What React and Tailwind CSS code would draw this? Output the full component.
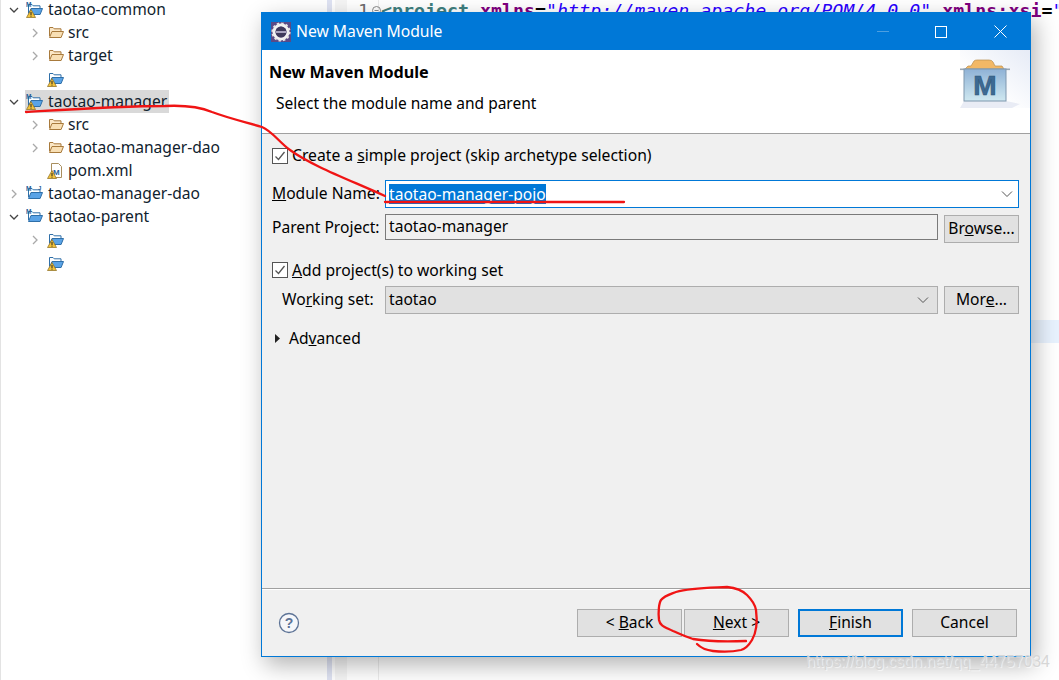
import React from 'react';

const ui = 'font-["Noto_Sans",sans-serif]';

function Chevron({ open }) {
  return (
    <svg width="10" height="10" viewBox="0 0 10 10" fill="none" stroke={open ? '#444' : '#a9a9a9'} strokeWidth="1.3">
      {open ? <path d="M1 3l4 4 4-4" /> : <path d="M3 1l4 4-4 4" />}
    </svg>
  );
}

function Warn() {
  return (
    <g>
      <path d="M5 8.5L9.5 16.5H.5z" fill="#f3c33b" stroke="#8a6a1c" strokeWidth="0.7" />
      <rect x="4.5" y="11" width="1" height="3" fill="#222" />
      <rect x="4.5" y="14.6" width="1" height="1" fill="#222" />
    </g>
  );
}

function Folder({ blue, warn, maven, j }) {
  const back = blue ? '#fff' : '#fbe7c6';
  const front = blue ? '#5aa3e6' : '#f8dfb4';
  const line = blue ? '#2f6fa8' : '#a87a3c';
  return (
    <svg width="18" height="18" viewBox="0 0 18 18" className="shrink-0">
      <path d="M2.5 12V3.5H6l1.2 1.3H14V8" fill={back} stroke={line} strokeWidth="1" />
      <path d="M2.5 13.5L5 7.5h11.5l-2.4 6z" fill={front} stroke={line} strokeWidth="1" />
      {maven && <text x="0" y="5.5" fontSize="6.5" fontWeight="700" fill="#2a5f96" fontFamily="Liberation Sans">M</text>}
      {j && <text x="12" y="5" fontSize="6" fontWeight="700" fill="#2a5f96" fontFamily="Liberation Sans">J</text>}
      {warn && <Warn />}
    </svg>
  );
}

function PomIcon() {
  return (
    <svg width="18" height="18" viewBox="0 0 18 18" className="shrink-0">
      <path d="M4.5 1.5h7l3 3v11h-10z" fill="#fff" stroke="#a98f5e" />
      <text x="6" y="12.5" fontSize="8" fontWeight="700" fill="#2a5f96" fontFamily="Liberation Sans">M</text>
      <Warn />
    </svg>
  );
}

function TreeRow({ depth, arrow, label, children, selected }) {
  return (
    <div className={depth ? 'flex items-center h-[23px] pl-[29px]' : 'flex items-center h-[23px] pl-[8px]'}>
      <div className="w-[10px] shrink-0 flex justify-center">
        {arrow && <Chevron open={arrow === 'open'} />}
      </div>
      <div className={`flex items-center h-[23px] ml-[6px] pl-[1px] pr-[2px] ${depth ? 'gap-[3px]' : 'gap-[4px]'} ${selected ? 'bg-[#d9d9d9]' : ''}`}>
        {children}
        {label && <span className="text-[15.6px] leading-[17px] text-[#10222e] whitespace-nowrap">{label}</span>}
      </div>
    </div>
  );
}

function Check({ children }) {
  return (
    <div className="flex items-center gap-[4px] text-[15.7px] text-black">
      <span className="w-[16px] h-[16px] border border-[#555] bg-white flex items-center justify-center">
        <svg width="12" height="12" viewBox="0 0 12 12" fill="none" stroke="#555" strokeWidth="1.3"><path d="M1.5 6.5l3 3 6-7.5" /></svg>
      </span>
      <span>{children}</span>
    </div>
  );
}

function Btn({ children, w, primary, className = '' }) {
  return (
    <button type="button" className={`h-[28px] text-[15.6px] text-black bg-[#e1e1e1] ${primary ? 'border-2 border-[#0078d7]' : 'border border-[#adadad]'} ${w} ${className}`}>
      {children}
    </button>
  );
}

function ComboArrow() {
  return (
    <svg width="12" height="8" viewBox="0 0 12 8" fill="none" stroke="#555" strokeWidth="1"><path d="M1 1.5l5 5 5-5" /></svg>
  );
}

function GearIcon() {
  return (
    <svg width="20" height="20" viewBox="0 0 20 20">
      <rect width="20" height="20" fill="#5a4a86" />
      <circle cx="10" cy="10" r="7" fill="none" stroke="#f2f2f2" strokeWidth="3" />
      <circle cx="10" cy="10" r="8.6" fill="none" stroke="#e6e6e6" strokeWidth="2" strokeDasharray="2.4 2.1" />
      <circle cx="10" cy="10" r="5.4" fill="#3f3a5c" />
      <rect x="5" y="9" width="10" height="2" fill="#a9a4c0" />
    </svg>
  );
}

function MavenLogo() {
  return (
    <svg width="70" height="58" viewBox="0 0 70 58">
      <defs>
        <linearGradient id="wash" x1="0" y1="1" x2="1" y2="0">
          <stop offset="0.35" stopColor="#fff" />
          <stop offset="1" stopColor="#e6ebf6" />
        </linearGradient>
        <linearGradient id="box" x1="0" y1="0" x2="0" y2="1">
          <stop offset="0" stopColor="#8fb2d6" />
          <stop offset="1" stopColor="#cfe8f0" />
        </linearGradient>
      </defs>
      <rect width="70" height="58" fill="url(#wash)" />
      <path d="M4 51h42l14 3-8 4H0z" fill="#e9ecf5" />
      <path d="M5 19l3-3h3l3-5q1-1 3-1h12q3 0 4 2l2 4h7l2 3z" fill="#f2b866" stroke="#b98d4c" strokeWidth="0.7" />
      <rect x="0" y="18.5" width="50" height="1.6" fill="#9aa7b4" />
      <rect x="4" y="19" width="42" height="32" fill="url(#box)" stroke="#7f97ae" />
      <text x="25" y="45" textAnchor="middle" fontSize="28" fontWeight="700" fill="#3c6a94" stroke="#2e5376" strokeWidth="0.6" fontFamily="Liberation Sans">M</text>
    </svg>
  );
}

function Annotations() {
  return (
    <svg className="absolute inset-0 pointer-events-none" width="1059" height="680" fill="none" stroke="#f01414" strokeWidth="2.3" strokeLinecap="round" strokeLinejoin="round">
      <path d="M26 112C60 110 120 106 165 106C185 105 200 107 212 112C228 118 245 122 262 127C272 131 280 143 290 150C312 166 350 180 385 196" />
      <path d="M385 202L624 202" />
      <path d="M746 641C725 642 705 641 693 639C683 636 678 633 673 631C665 627 660 626 659 620C658 612 659 603 661 600C664 596 668 595 676 592C690 588 705 588 727 587C737 588 743 591 747 595C752 600 755 604 756 610C758 625 756 633 752 640C749 645 745 649 741 650C732 652 722 652 713 651C705 650 700 647 697 644" />
    </svg>
  );
}

export default function App() {
  return (
    <div className={`relative w-[1059px] h-[680px] overflow-hidden bg-white flex ${ui}`}>
      {/* project explorer */}
      <div className="w-[327px] shrink-0 -mt-[2px] border-l border-[#e3e3e3]">
        <TreeRow depth={0} arrow="open" label="taotao-common"><Folder blue warn maven /></TreeRow>
        <TreeRow depth={1} arrow="closed" label="src"><Folder /></TreeRow>
        <TreeRow depth={1} arrow="closed" label="target"><Folder /></TreeRow>
        <TreeRow depth={1}><Folder blue warn /></TreeRow>
        <TreeRow depth={0} arrow="open" label="taotao-manager" selected><Folder blue warn maven /></TreeRow>
        <TreeRow depth={1} arrow="closed" label="src"><Folder /></TreeRow>
        <TreeRow depth={1} arrow="closed" label="taotao-manager-dao"><Folder /></TreeRow>
        <TreeRow depth={1} label="pom.xml"><PomIcon /></TreeRow>
        <TreeRow depth={0} arrow="closed" label="taotao-manager-dao"><Folder blue maven j /></TreeRow>
        <TreeRow depth={0} arrow="open" label="taotao-parent"><Folder blue maven /></TreeRow>
        <TreeRow depth={1} arrow="closed"><Folder blue warn /></TreeRow>
        <TreeRow depth={1}><Folder blue warn /></TreeRow>
      </div>

      {/* editor behind the dialog */}
      <div className="w-[5px] shrink-0 bg-[#dfe3f3]" />
      <div className="w-[3px] shrink-0 bg-white" />
      <div className="w-[12px] shrink-0 bg-[#f5f5f5]" />
      <div className="flex-1 flex min-w-0 font-['DejaVu_Sans_Mono',monospace] text-[18.3px]">
        <div className="w-[32px] shrink-0 border-r border-[#ececec] h-full">
          <div className="flex items-center h-[21px] pl-[11px] whitespace-nowrap text-[#6d6d6d]">
            <span>1</span>
            <svg className="ml-[3px] shrink-0" width="9" height="9" viewBox="0 0 9 9" fill="none" stroke="#8a8a8a"><circle cx="4.5" cy="4.5" r="4" /><path d="M2.5 4.5h4" /></svg>
          </div>
        </div>
        <div className="flex-1 min-w-0 pl-[2px]">
          <div className="flex items-center h-[21px] whitespace-nowrap font-bold">
            <span className="text-[#3f7f7f]">&lt;project&nbsp;</span>
            <span className="text-[#7f007f]">xmlns</span>
            <span className="text-black">=</span>
            <span className="text-[#2a00ff] italic font-normal">"http://maven.apache.org/POM/4.0.0"</span>
            <span>&nbsp;</span>
            <span className="text-[#7f007f]">xmlns:xsi</span>
            <span className="text-black">=</span>
            <span className="text-[#2a00ff] italic font-normal">"</span>
          </div>
          <div className="mt-[299px] h-[23px] bg-[#e8f2fe]" />
        </div>
      </div>

      {/* dialog */}
      <div className="absolute left-[261px] top-[12px] w-[770px] h-[645px] flex flex-col bg-[#f0f0f0] border border-[#0078d7] shadow-[4px_8px_22px_rgba(0,0,0,0.3)]">
        <div className="h-[37px] shrink-0 bg-[#0078d7] flex items-center pl-[9px] text-white text-[15.7px]">
          <GearIcon />
          <span className="ml-[5px]">New Maven Module</span>
          <svg className="ml-auto mr-[46px]" width="12" height="2" viewBox="0 0 12 2"><rect width="12" height="1" fill="#4d9fe0" /></svg>
          <svg className="mr-[47px]" width="12" height="12" viewBox="0 0 12 12" fill="none" stroke="#fff"><rect x="0.5" y="0.5" width="11" height="11" /></svg>
          <svg className="mr-[23px]" width="13" height="13" viewBox="0 0 13 13" fill="none" stroke="#fff"><path d="M.5.5l12 12M12.5.5l-12 12" /></svg>
        </div>
        <div className="h-[84px] shrink-0 bg-white border-b border-[#a0a0a0] relative pl-[7px] pt-[10px]">
          <div className="text-[16.2px] font-bold text-black leading-[24px]">New Maven Module</div>
          <div className="text-[15.5px] text-black leading-[22px] mt-[8px] pl-[7px]">Select the module name and parent</div>
          <div className="absolute right-0 top-0"><MavenLogo /></div>
        </div>
        <div className="flex-1 pl-[10px] pr-[11px] pt-[10px]">
          <Check>Create a <u>s</u>imple project (skip archetype selection)</Check>
          <div className="flex items-center mt-[12px] text-[15.6px] text-black">
            <span className="w-[113px] shrink-0"><u>M</u>odule Name:</span>
            <div className="flex-1 h-[28px] bg-white border border-[#0078d7] flex items-center pl-[3px] pr-[5px]">
              <span className="bg-[#0078d7] text-white leading-[20px]">taotao-manager-pojo</span>
              <span className="ml-auto"><ComboArrow /></span>
            </div>
          </div>
          <div className="flex items-start mt-[6px] text-[15.6px] text-black">
            <span className="w-[113px] shrink-0 self-center">Parent Project:</span>
            <div className="flex-1 h-[26px] bg-[#f0f0f0] border border-[#7a7a7a] flex items-center pl-[3px]">taotao-manager</div>
            <Btn w="w-[75px]" className="ml-[6px] mt-[1px]">Br<u>o</u>wse...</Btn>
          </div>
          <div className="mt-[16px]"><Check><u>A</u>dd project(s) to working set</Check></div>
          <div className="flex items-center mt-[4px] text-[15.6px] text-black">
            <span className="w-[113px] shrink-0 pl-[10px]">Wo<u>r</u>king set:</span>
            <div className="flex-1 h-[28px] bg-[#e1e1e1] border border-[#adadad] flex items-center pl-[3px] pr-[8px]">
              taotao
              <span className="ml-auto"><ComboArrow /></span>
            </div>
            <Btn w="w-[75px]" className="ml-[6px]">Mor<u>e</u>...</Btn>
          </div>
          <div className="flex items-center mt-[13px] text-[15.6px] text-black">
            <svg className="mr-[9px] ml-[3px]" width="5" height="9" viewBox="0 0 5 9"><path d="M0 0l5 4.5L0 9z" fill="#222" /></svg>
            <span>Ad<u>v</u>anced</span>
          </div>
        </div>
        <div className="h-[68px] shrink-0 border-t border-[#a0a0a0] flex items-center pl-[16px] pr-[13px] pt-[1px] shadow-[inset_0_1px_0_#fff]">
          <svg width="22" height="22" viewBox="0 0 22 22">
            <circle cx="11" cy="11" r="9.5" fill="#f6f7fa" stroke="#5d7396" strokeWidth="1.3" />
            <text x="11" y="16" textAnchor="middle" fontSize="14" fontWeight="700" fill="#5d7396" fontFamily="Liberation Sans">?</text>
          </svg>
          <div className="ml-auto flex">
            <Btn w="w-[105px]">&lt; <u>B</u>ack</Btn>
            <Btn w="w-[105px]" className="ml-[2px]"><u>N</u>ext &gt;</Btn>
            <Btn w="w-[105px]" primary className="ml-[9px]"><u>F</u>inish</Btn>
            <Btn w="w-[105px]" className="ml-[9px]">Cancel</Btn>
          </div>
        </div>
      </div>

      <Annotations />

      {/* blog watermark */}
      <div className="absolute left-[806px] top-[652px] text-[15.9px] leading-[19px] text-[#d6d6d6] font-['Liberation_Sans',sans-serif] [text-shadow:1px_1px_1px_rgba(255,255,255,0.7)] whitespace-nowrap">https://blog.csdn.net/qq_44757034</div>
    </div>
  );
}
